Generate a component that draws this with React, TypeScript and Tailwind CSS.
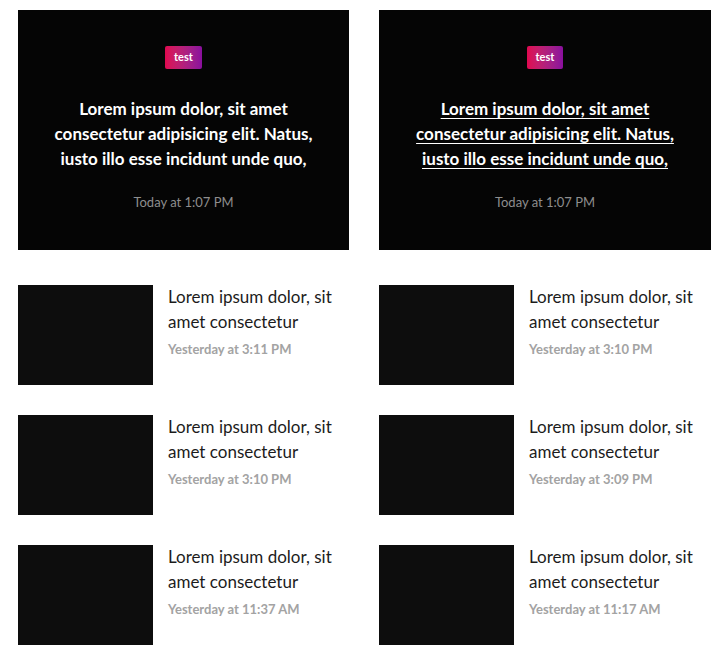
const posts = [
  [
    { title: 'Lorem ipsum dolor, sit amet consectetur', date: 'Yesterday at 3:11 PM' },
    { title: 'Lorem ipsum dolor, sit amet consectetur', date: 'Yesterday at 3:10 PM' },
    { title: 'Lorem ipsum dolor, sit amet consectetur', date: 'Yesterday at 11:37 AM' },
  ],
  [
    { title: 'Lorem ipsum dolor, sit amet consectetur', date: 'Yesterday at 3:10 PM' },
    { title: 'Lorem ipsum dolor, sit amet consectetur', date: 'Yesterday at 3:09 PM' },
    { title: 'Lorem ipsum dolor, sit amet consectetur', date: 'Yesterday at 11:17 AM' },
  ],
];

const FeaturedCard = ({ underline }: { underline?: boolean }) => (
  <div className="h-[240px] bg-[#050505] flex flex-col items-center pt-[36px]">
    <span className="h-[23px] px-[9px] flex items-center rounded-[2px] bg-gradient-to-r from-[#e0064f] to-[#8a0e9e] text-white text-[11px] font-bold">
      test
    </span>
    <h2
      className={
        'mt-[27px] px-[30px] text-center text-white text-[17px] leading-[25px] font-bold ' +
        (underline ? 'underline underline-offset-[3px]' : '')
      }
    >
      Lorem ipsum dolor, sit amet consectetur adipisicing elit. Natus, iusto illo esse incidunt unde quo,
    </h2>
    <span className="mt-[22px] text-[13px] text-[#8e8e8e]">Today at 1:07 PM</span>
  </div>
);

const PostRow = ({ title, date }: { title: string; date: string }) => (
  <div className="flex gap-[15px]">
    <div className="w-[135px] h-[100px] shrink-0 bg-[#0d0d0d]" />
    <div className="flex flex-col -mt-[1px]">
      <h3 className="text-[17px] leading-[25px] text-[#1c1c1c] pr-[10px]">{title}</h3>
      <span className="mt-[5px] text-[13px] leading-[20px] font-bold text-[#a3a3a3]">{date}</span>
    </div>
  </div>
);

export default function App() {
  return (
    <div className="min-h-screen bg-white pt-[10px] pl-[18px]" style={{ fontFamily: 'Lato, "Open Sans", sans-serif' }}>
      <div className="grid grid-cols-[331px_332px] gap-x-[30px]">
        {posts.map((column, i) => (
          <div key={i} className="flex flex-col">
            <FeaturedCard underline={i === 1} />
            <div className="mt-[35px] flex flex-col gap-[30px]">
              {column.map((p, j) => (
                <PostRow key={j} title={p.title} date={p.date} />
              ))}
            </div>
          </div>
        ))}
      </div>
    </div>
  );
}
